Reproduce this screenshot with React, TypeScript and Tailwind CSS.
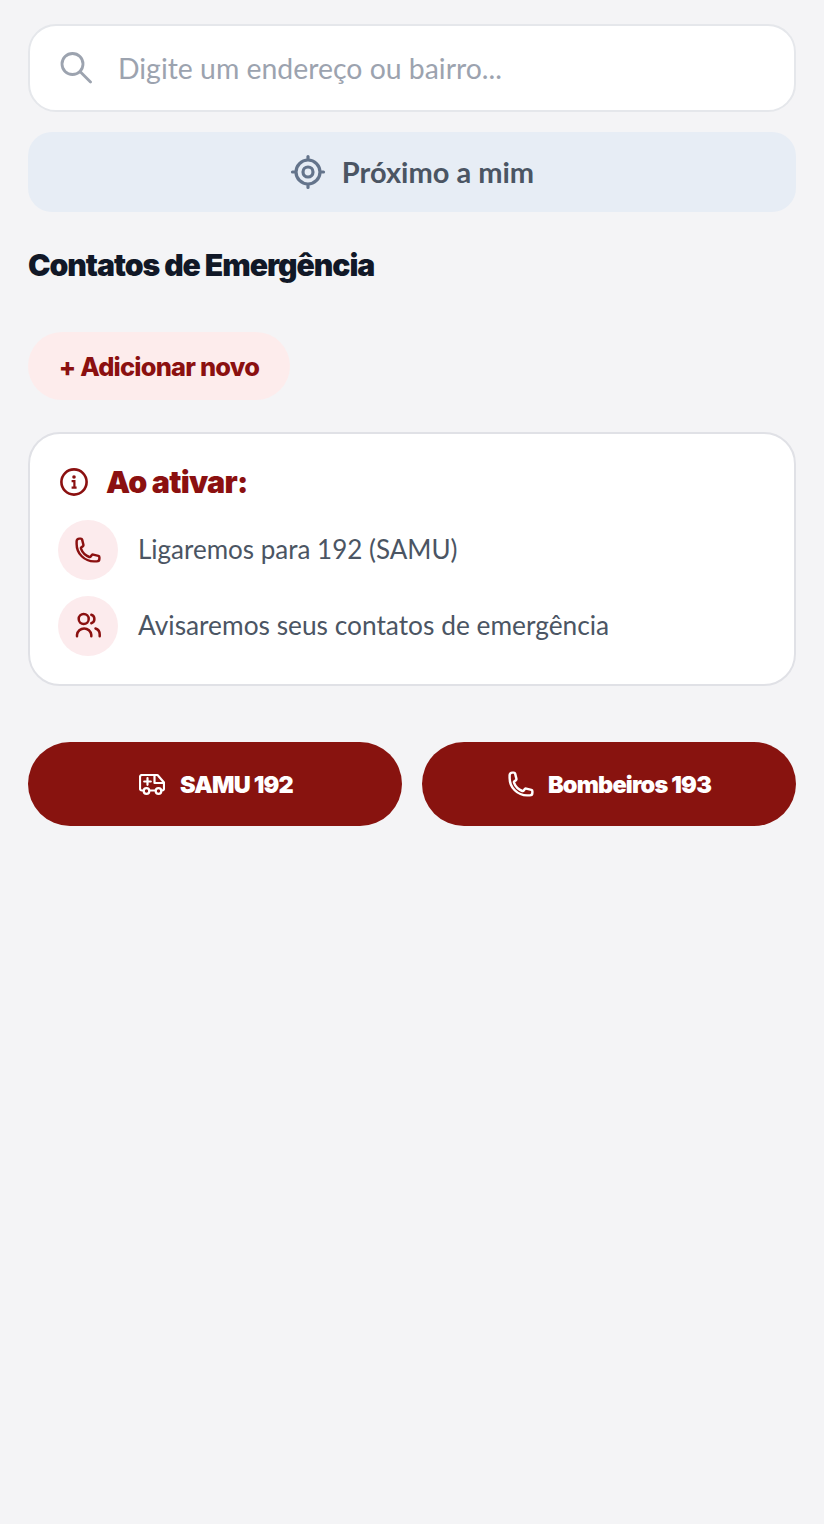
import React from "react";

const SearchIcon = () => (
    <svg viewBox="0 0 32 32" fill="none" stroke="currentColor" strokeWidth={2.8} strokeLinecap="round" className="h-8 w-8 text-[#9ca3af]">
        <circle cx="12.5" cy="12" r="10.5" />
        <path d="M20 19.5 30.5 30" />
    </svg>
);

const TargetIcon = () => (
    <svg viewBox="0 0 36 36" fill="none" stroke="currentColor" strokeWidth={3.2} strokeLinecap="round" className="h-9 w-9 text-[#64748b]">
        <circle cx="18" cy="18" r="12" />
        <circle cx="18" cy="18" r="5" />
        <path d="M18 2.5v2M18 31.5v2M2.5 18h2M31.5 18h2" />
    </svg>
);

const InfoIcon = () => (
    <svg viewBox="0 0 28 28" fill="none" stroke="currentColor" strokeWidth={2.6} className="h-7 w-7 text-[#8b1010]">
        <circle cx="14" cy="14" r="12.6" />
        <circle cx="14" cy="9" r="1.8" fill="currentColor" stroke="none" />
        <path d="M11.6 13.2h2.8v6.2M11.6 19.6h5" strokeWidth={2.2} />
    </svg>
);

const PhoneIcon = ({ className }: { className: string }) => (
    <svg viewBox="0 0 24 24" fill="none" stroke="currentColor" strokeWidth={2.1} strokeLinejoin="round" className={className}>
        <path d="M2.25 6.75c0 8.284 6.716 15 15 15h2.25a2.25 2.25 0 0 0 2.25-2.25v-1.372c0-.516-.351-.966-.852-1.091l-4.423-1.106c-.44-.11-.902.055-1.173.417l-.97 1.293c-.282.376-.769.542-1.21.38a12.035 12.035 0 0 1-7.143-7.143c-.162-.441.004-.928.38-1.21l1.293-.97c.363-.271.527-.734.417-1.173L6.963 3.102a1.125 1.125 0 0 0-1.091-.852H4.5A2.25 2.25 0 0 0 2.25 4.5v2.25Z" />
    </svg>
);

const UsersIcon = () => (
    <svg viewBox="0 0 28 28" fill="none" stroke="currentColor" strokeWidth={2.5} strokeLinecap="round" className="h-7 w-7 text-[#8b1010]">
        <circle cx="9.7" cy="7" r="5" />
        <path d="M17.3 2.8a4.4 4.4 0 0 1 0 8.4" />
        <path d="M3 24.3v-1.5a7.2 7.2 0 0 1 14.3 0v1.5" />
        <path d="M21.5 16.5c2.5.8 4.2 3.2 4.2 6v1.8" />
    </svg>
);

const AmbulanceIcon = () => (
    <svg viewBox="0 0 26 21" fill="none" stroke="currentColor" strokeWidth={2.2} strokeLinecap="round" strokeLinejoin="round" className="h-[21px] w-[26px]">
        <path d="M4.5 16.5H3a2 2 0 0 1-2-2V3a2 2 0 0 1 2-2h14.5c1 0 1.6.4 2.1 1.2L25 8.5v6a2 2 0 0 1-2 2h-1" />
        <path d="M10.5 16.5h6" />
        <path d="M15.5 1v8H25" />
        <path d="M8.5 4.2v6.600M5.2 7.500h6.600" />
        <circle cx="7.5" cy="17" r="2.8" />
        <circle cx="19.5" cy="17" r="2.8" />
    </svg>
);

export default function App() {
    return (
        <div className="min-h-[1524px] bg-[#f4f4f6] font-['Lato',sans-serif]">
            <div className="flex flex-col px-7 pt-6">
                {/* Search */}
                <div className="flex h-[88px] items-center rounded-[28px] border-2 border-[#e5e7eb] bg-white pl-[30px]">
                    <SearchIcon />
                    <span className="ml-[26px] text-[28.4px] text-[#9ca3af]">Digite um endereço ou bairro...</span>
                </div>

                {/* Near me */}
                <button className="mt-5 flex h-20 items-center justify-center rounded-[24px] bg-[#e7edf5]">
                    <TargetIcon />
                    <span className="ml-4 text-[29px] font-bold text-[#4b5563]">Próximo a mim</span>
                </button>

                <h2 className="mt-[34px] font-['Inter',sans-serif] text-[30.2px] leading-[38px] font-black tracking-[-0.035em] text-[#111827]">Contatos de Emergência</h2>

                <button className="mt-[48px] flex h-[68px] w-[262px] items-center justify-center rounded-full bg-[#fdecec] pt-0.5 font-['Inter',sans-serif] text-[25.4px] font-extrabold tracking-[-0.03em] text-[#8b1010]">
                    + Adicionar novo
                </button>

                {/* Info card */}
                <div className="mt-8 flex h-[254px] flex-col rounded-[32px] border-2 border-[#e0e1e6] bg-white pt-[28px] pl-[28px]">
                    <div className="flex h-10 items-center pl-0.5">
                        <InfoIcon />
                        <span className="ml-[18px] font-['Inter',sans-serif] text-[30.5px] font-black tracking-[-0.025em] text-[#8b1010]">Ao ativar:</span>
                    </div>
                    <div className="mt-[18px] flex items-center">
                        <div className="flex h-[60px] w-[60px] items-center justify-center rounded-full bg-[#fcebed]">
                            <PhoneIcon className="h-7 w-7 text-[#8b1010]" />
                        </div>
                        <span className="ml-5 -translate-y-px text-[26px] text-[#4b5563]">Ligaremos para 192 (SAMU)</span>
                    </div>
                    <div className="mt-4 flex items-center">
                        <div className="flex h-[60px] w-[60px] items-center justify-center rounded-full bg-[#fcebed]">
                            <UsersIcon />
                        </div>
                        <span className="ml-5 text-[26.3px] text-[#4b5563]">Avisaremos seus contatos de emergência</span>
                    </div>
                </div>

                {/* Emergency calls */}
                <div className="mt-14 grid grid-cols-2 gap-5">
                    <button className="flex h-[84px] items-center justify-center rounded-full bg-[#88130f] pl-0.5 text-white">
                        <AmbulanceIcon />
                        <span className="ml-[15px] translate-y-px font-['Inter',sans-serif] text-[23.5px] font-black tracking-[-0.035em]">SAMU 192</span>
                    </button>
                    <button className="flex h-[84px] items-center justify-center rounded-full bg-[#88130f] text-white">
                        <PhoneIcon className="h-7 w-7" />
                        <span className="ml-[13px] translate-y-px font-['Inter',sans-serif] text-[23.5px] font-black tracking-[-0.035em]">Bombeiros 193</span>
                    </button>
                </div>
            </div>
        </div>
    );
}
